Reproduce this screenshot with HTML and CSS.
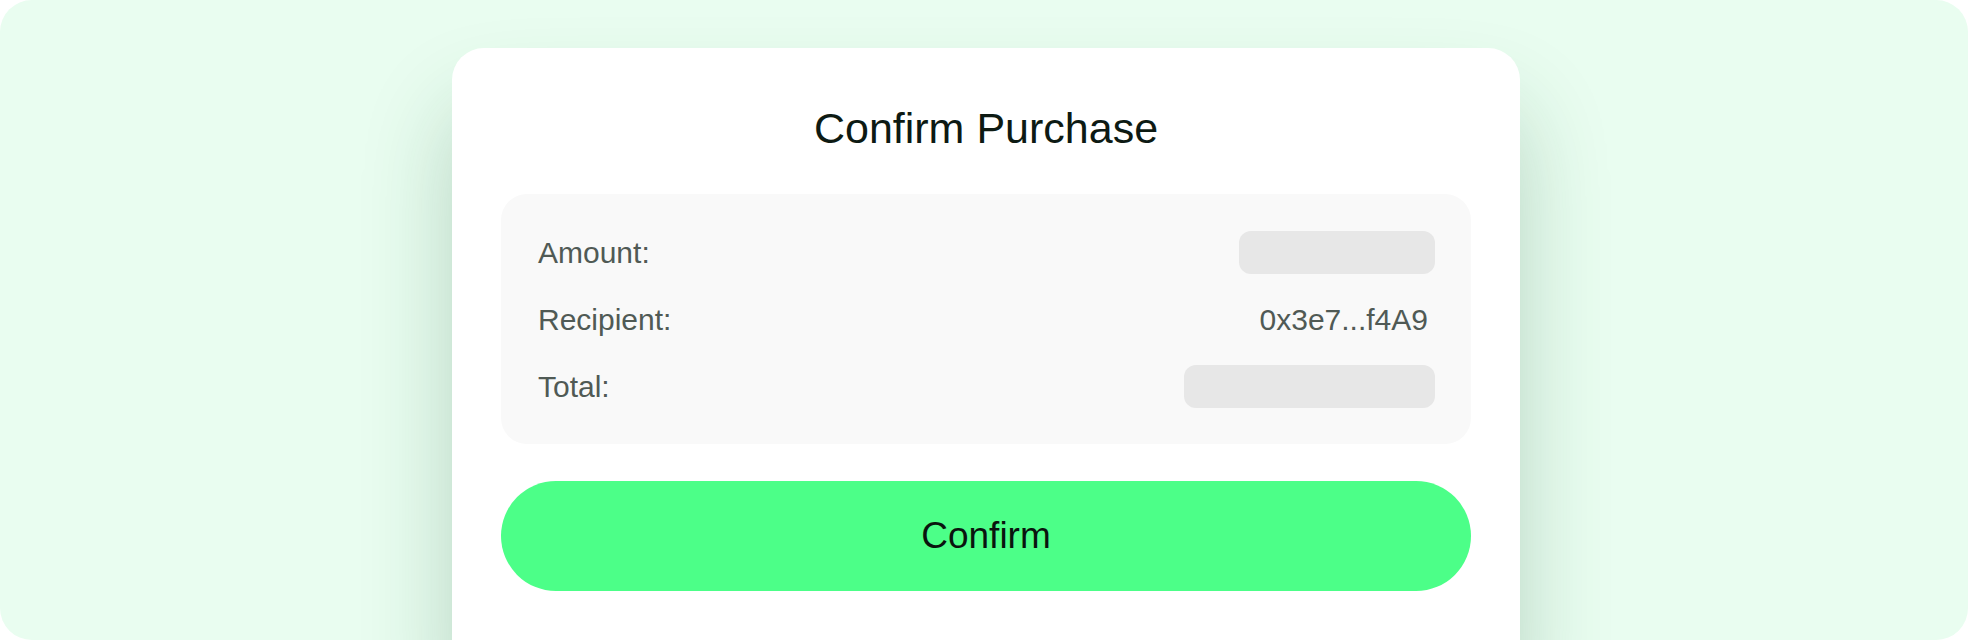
FILE: index.html
```html
<!DOCTYPE html>
<html lang="en">
<head>
    <meta charset="UTF-8">
    <meta name="viewport" content="width=device-width, initial-scale=1.0">
    <title>Confirm Purchase</title>
    <link rel="stylesheet" href="styles.css">
</head>
<body>
    <div class="stage">
        <div class="card">
            <h1 class="card-title">Confirm Purchase</h1>
            <div class="summary">
                <div class="summary-row">
                    <span class="summary-label">Amount:</span>
                    <span class="skeleton skeleton-amount"></span>
                </div>
                <div class="summary-row">
                    <span class="summary-label">Recipient:</span>
                    <span class="summary-value">0x3e7...f4A9</span>
                </div>
                <div class="summary-row">
                    <span class="summary-label">Total:</span>
                    <span class="skeleton skeleton-total"></span>
                </div>
            </div>
            <button type="button" class="confirm-btn">Confirm</button>
        </div>
    </div>
</body>
</html>
```

FILE: styles.css
```css
body {
    margin: 0;
    background-color: #ffffff;
    font-family: "Liberation Sans", Arial, sans-serif;
}
.stage {
    height: 640px;
    box-sizing: border-box;
    padding: 48px 0 0 4px;
    display: flex;
    justify-content: center;
    align-items: flex-start;
    background-color: #e9fdf0; /* Mint background */
    border-radius: 32px;
    overflow: hidden;
}
.card {
    width: 970px;
    padding: 48px 49px 80px;
    background-color: #ffffff;
    border-radius: 32px;
    box-shadow: 0 60px 90px rgba(25, 85, 50, 0.24);
}
.card-title {
    margin: 0 0 34px;
    font-size: 43px;
    line-height: 64px;
    font-weight: 400;
    text-align: center;
    color: #0d1a13;
}
.summary {
    display: flex;
    flex-direction: column;
    gap: 24px;
    padding: 37px 36px 36px 37px;
    background-color: #f9f9f9;
    border-radius: 26px;
}
.summary-row {
    display: flex;
    justify-content: space-between;
    align-items: center;
    min-height: 43px;
    font-size: 30px;
    color: #505a55;
}
.summary-value {
    margin-right: 7px;
}
.skeleton {
    height: 43px;
    background-color: #e7e7e7;
    border-radius: 12px;
}
.skeleton-amount {
    width: 196px;
}
.skeleton-total {
    width: 251px;
}
.confirm-btn {
    display: block;
    width: 100%;
    height: 110px;
    margin-top: 37px;
    border: none;
    border-radius: 55px;
    background-color: #4cff88; /* Bright green */
    color: #0a140e;
    font-family: inherit;
    font-size: 37px;
    cursor: pointer;
}
```
